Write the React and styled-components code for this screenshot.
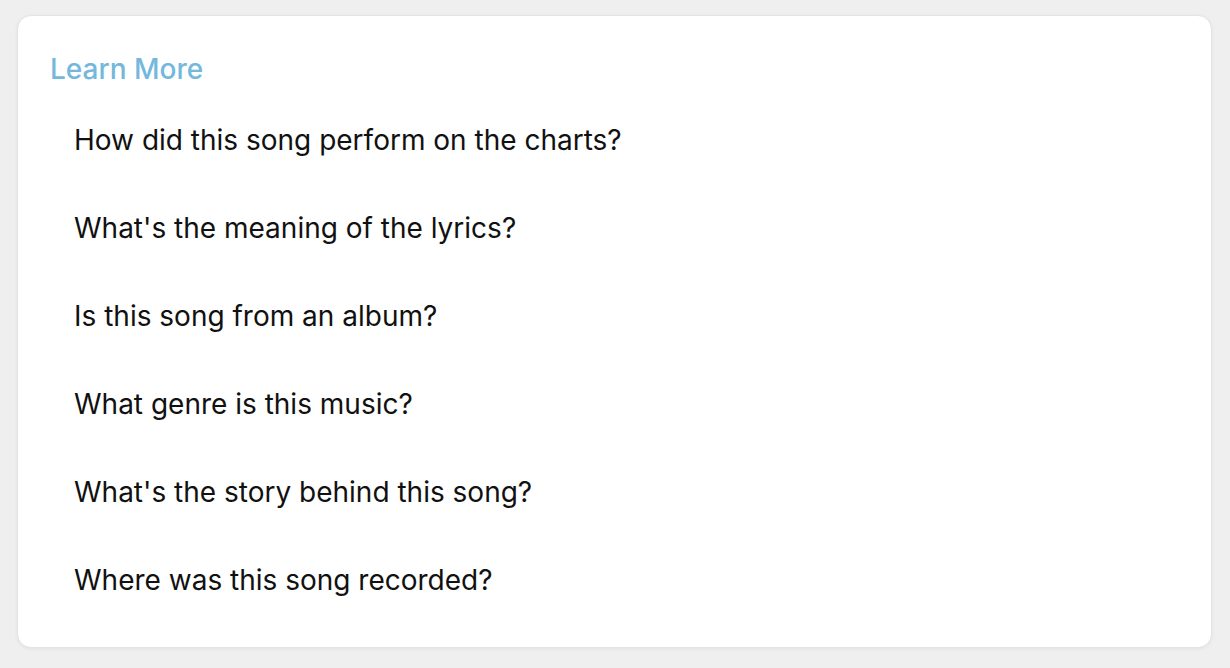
import React from 'react'
import styled, { createGlobalStyle } from 'styled-components'

const questions = [
  'How did this song perform on the charts?',
  "What's the meaning of the lyrics?",
  'Is this song from an album?',
  'What genre is this music?',
  "What's the story behind this song?",
  'Where was this song recorded?',
]

function App() {
  return (
    <>
      <GlobalStyle />
      <Page>
        <Card>
          <Title>Learn More</Title>
          <List>
            {questions.map((q) => (
              <Item key={q}>{q}</Item>
            ))}
          </List>
        </Card>
      </Page>
    </>
  )
}

const GlobalStyle = createGlobalStyle`
html, body {
  margin:0;
  background:#efefef;
  font-family:Inter, "Noto Sans", sans-serif;
}
`
const Page = styled.div`
padding:15px 18px 20px 17px;
`
const Card = styled.div`
background:#fff;
border-radius:14px;
border:1px solid #e4e4e4;
box-shadow:0 1px 4px rgba(0,0,0,0.06);
padding:35px 32px 23px 32px;
display:flex;
flex-direction:column;
`
const Title = styled.h2`
margin:0;
font-size:28px;
font-weight:500;
line-height:36px;
color:#74b8db;
`
const List = styled.ul`
list-style:none;
margin:0;
padding:0 0 0 24px;
display:flex;
flex-direction:column;
margin-top:9px;
`
const Item = styled.li`
font-size:28px;
font-weight:400;
line-height:36px;
height:88px;
display:flex;
align-items:center;
color:#111;
cursor:pointer;
`

export default App
